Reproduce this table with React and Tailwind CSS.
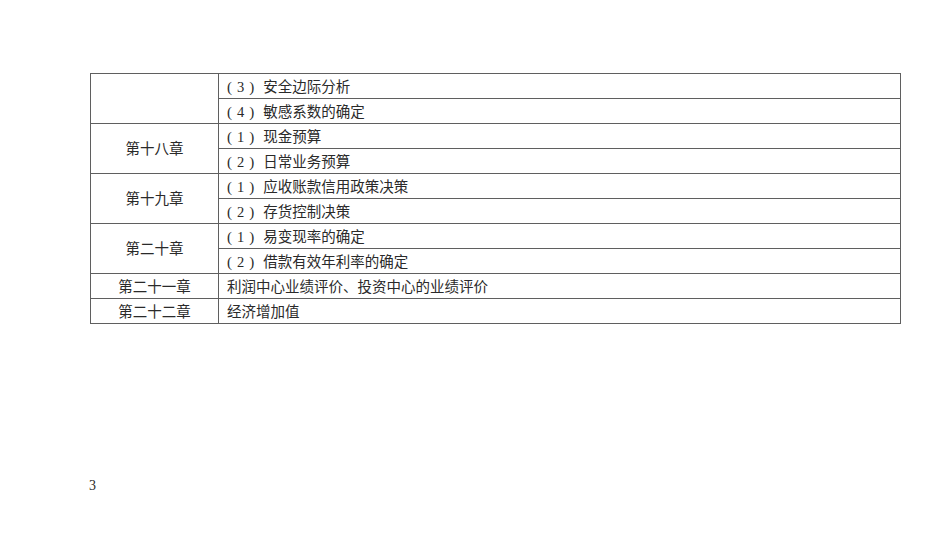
function Item({ n, t }) {
  if (!n) return <span>{t}</span>;
  return (
    <span>
      <span className="mr-[5px] text-[15px]">(</span>
      {n}
      <span className="ml-[5px] mr-[9px] text-[15px]">)</span>
      {t}
    </span>
  );
}

export default function App() {
  const groups = [
    { ch: "", items: [["3", "安全边际分析"], ["4", "敏感系数的确定"]] },
    { ch: "第十八章", items: [["1", "现金预算"], ["2", "日常业务预算"]] },
    { ch: "第十九章", items: [["1", "应收账款信用政策决策"], ["2", "存货控制决策"]] },
    { ch: "第二十章", items: [["1", "易变现率的确定"], ["2", "借款有效年利率的确定"]] },
    { ch: "第二十一章", items: [["", "利润中心业绩评价、投资中心的业绩评价"]] },
    { ch: "第二十二章", items: [["", "经济增加值"]] },
  ];
  const font = { fontFamily: '"Liberation Serif", "Noto Sans CJK SC", serif' };
  return (
    <div className="w-[950px] h-[555px] bg-white relative text-[#2a2a2a]" style={font}>
      <div className="pt-[73px] pl-[90px]">
        <table className="border-collapse w-[811px] text-[14.5px] leading-none">
          <tbody>
            {groups.map((g, gi) =>
              g.items.map((it, ii) => (
                <tr key={gi + "-" + ii} className="h-[25px]">
                  {ii === 0 && (
                    <td
                      rowSpan={g.items.length}
                      className="border border-[#5f5f5f] w-[128px] text-center align-middle p-0 pt-[2px]"
                    >
                      {g.ch}
                    </td>
                  )}
                  <td className="border border-[#5f5f5f] p-0 pl-[8px] pt-[2px] align-middle">
                    <Item n={it[0]} t={it[1]} />
                  </td>
                </tr>
              ))
            )}
          </tbody>
        </table>
      </div>
      <div className="absolute left-[89px] top-[475px] text-[14px]">3</div>
    </div>
  );
}
